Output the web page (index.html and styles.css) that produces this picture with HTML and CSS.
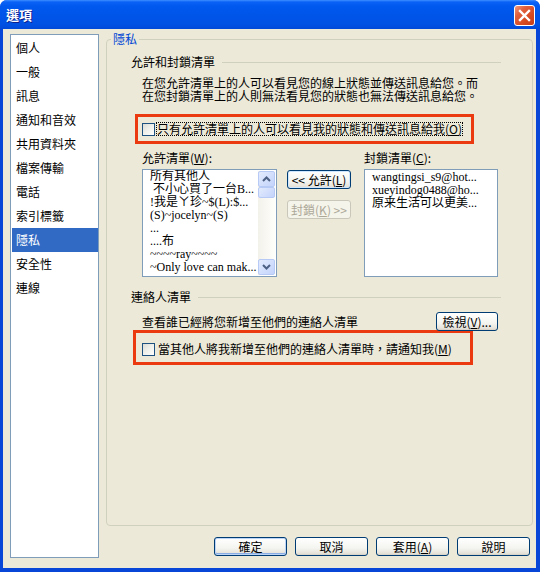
FILE: index.html
```html
<!DOCTYPE html>
<html>

<head>
    <meta charset="UTF-8">
    <title>選項</title>
    <link rel="stylesheet" href="styles.css">
</head>

<body>
    <div class="window">
        <!-- Barra de título -->
        <div class="titlebar">
            <span class="title">選項</span>
            <span class="close-btn">
                <svg width="13" height="13" viewBox="0 0 13 13">
                    <path d="M2 2 L11 11 M11 2 L2 11" stroke="#fff" stroke-width="2.4" stroke-linecap="square" />
                </svg>
            </span>
        </div>

        <div class="body">
            <!-- Categorías -->
            <ul class="category-list">
                <li>個人</li>
                <li>一般</li>
                <li>訊息</li>
                <li>通知和音效</li>
                <li>共用資料夾</li>
                <li>檔案傳輸</li>
                <li>電話</li>
                <li>索引標籤</li>
                <li class="selected">隱私</li>
                <li>安全性</li>
                <li>連線</li>
            </ul>

            <div class="main">
                <fieldset class="group">
                    <legend>隱私</legend>
                    <div class="group-body">
                        <div class="section-head"><span>允許和封鎖清單</span><span class="rule"></span></div>
                        <div class="desc">
                            <div class="desc-line">在您允許清單上的人可以看見您的線上狀態並傳送訊息給您。而</div>
                            <div class="desc-line">在您封鎖清單上的人則無法看見您的狀態也無法傳送訊息給您。</div>
                        </div>

                        <div class="notice notice-top">
                            <label class="check">
                                <span class="box"></span>
                                <span class="focus">只有允許清單上的人可以看見我的狀態和傳送訊息給我(<u>O</u>)</span>
                            </label>
                        </div>

                        <!-- Listas -->
                        <div class="lists">
                            <div class="list-col">
                                <div class="list-label">允許清單(<u>W</u>):</div>
                                <div class="listbox">
                                    <ul class="items">
                                        <li>所有其他人</li>
                                        <li>&nbsp;不小心買了一台B...</li>
                                        <li>!我是ㄚ珍~$(L):$...</li>
                                        <li>(S)~jocelyn~(S)</li>
                                        <li>...</li>
                                        <li>....布</li>
                                        <li>~~~~ray~~~~</li>
                                        <li>~Only love can mak...</li>
                                    </ul>
                                    <div class="scrollbar">
                                        <span class="sb-btn">
                                            <svg width="9" height="6" viewBox="0 0 9 6"><path d="M1 5 L4.5 1.5 L8 5" fill="none" stroke="#4D6185" stroke-width="2" /></svg>
                                        </span>
                                        <span class="sb-thumb"></span>
                                        <span class="sb-track"></span>
                                        <span class="sb-btn">
                                            <svg width="9" height="6" viewBox="0 0 9 6"><path d="M1 1 L4.5 4.5 L8 1" fill="none" stroke="#4D6185" stroke-width="2" /></svg>
                                        </span>
                                    </div>
                                </div>
                            </div>

                            <div class="mid-buttons">
                                <button class="btn btn-focus">&lt;&lt; 允許(<u>L</u>)</button>
                                <button class="btn btn-disabled">封鎖(<u>K</u>) &gt;&gt;</button>
                            </div>

                            <div class="list-col list-right">
                                <div class="list-label">封鎖清單(<u>C</u>):</div>
                                <div class="listbox">
                                    <ul class="items items-right">
                                        <li>wangtingsi_s9@hot...</li>
                                        <li>xueyindog0488@ho...</li>
                                        <li>原来生活可以更美...</li>
                                    </ul>
                                </div>
                            </div>
                        </div>

                        <div class="section-head section-contacts"><span>連絡人清單</span><span class="rule"></span></div>
                        <div class="view-row">
                            <span class="view-text">查看誰已經將您新增至他們的連絡人清單</span>
                            <button class="btn btn-view">檢視(<u>V</u>)...</button>
                        </div>

                        <div class="notice notice-bottom">
                            <label class="check">
                                <span class="box"></span>
                                <span class="check-text">當其他人將我新增至他們的連絡人清單時，請通知我(<u>M</u>)</span>
                            </label>
                        </div>
                    </div>
                </fieldset>

                <!-- Botones -->
                <div class="buttons">
                    <button class="btn btn-default">確定</button>
                    <button class="btn">取消</button>
                    <button class="btn">套用(<u>A</u>)</button>
                    <button class="btn">說明</button>
                </div>
            </div>
        </div>
    </div>
</body>

</html>
```

FILE: styles.css
```css
* {
    box-sizing: border-box;
}

body {
    margin: 0;
    font-family: "Noto Sans CJK TC", "Noto Sans", sans-serif;
    font-size: 12px;
    color: #000;
    background: #fff;
}

u {
    text-decoration: underline;
    text-underline-offset: 1px;
}

.window {
    width: 540px;
    height: 572px;
    display: flex;
    flex-direction: column;
    background: #0846D8;
    border-radius: 7px 7px 0 0;
    overflow: hidden;
}

.titlebar {
    height: 29px;
    flex: none;
    display: flex;
    justify-content: space-between;
    align-items: flex-start;
    padding: 5px 5px 0 6px;
    background: linear-gradient(#3D8FFF 0, #0C62F6 2px, #0059EF 6px, #0055E9 50%, #0051E3 85%, #0048D8 100%);
}

.title {
    color: #fff;
    font-weight: bold;
    font-size: 13px;
    line-height: 20px;
    text-shadow: 1px 1px #10208A;
}

.close-btn {
    width: 21px;
    height: 21px;
    border: 1px solid #fff;
    border-radius: 3px;
    background: linear-gradient(135deg, #F29A7C 0, #E2603E 30%, #D4481F 70%, #C53D18 100%);
    display: flex;
    align-items: center;
    justify-content: center;
}

.body {
    flex: 1;
    margin: 0 4px 4px 3px;
    background: #ECE9D8;
    display: grid;
    grid-template-columns: 89px 1fr;
    column-gap: 7px;
    padding: 3px 3px 10px 7px;
}

/* Lista de categorías */
.category-list {
    list-style: none;
    margin: 2px 0 0;
    padding: 1px 0 0;
    background: #fff;
    border: 1px solid #7F9DB9;
}

.category-list li {
    height: 24px;
    line-height: 24px;
    margin-left: 1px;
    padding-left: 4px;
}

.category-list li.selected {
    background: #316AC5;
    color: #fff;
}

.main {
    display: flex;
    flex-direction: column;
    padding-bottom: 2px;
    min-width: 0;
}

.group {
    flex: 1;
    margin: 0 0 11px;
    padding: 0 31px 0 0;
    border: 1px solid #D0D0BF;
    border-radius: 4px;
    min-width: 0;
}

.group legend {
    color: #0046D5;
    padding: 0 2px;
    margin-left: 4px;
    line-height: 14px;
}

.group-body {
    padding-left: 24px;
}

.section-head {
    display: flex;
    align-items: center;
    margin-top: 9px;
    line-height: 14px;
}

.section-head .rule {
    flex: 1;
    height: 1px;
    margin-left: 7px;
    background: #D0D0BF;
}

.desc {
    margin: 9px 0 0 11px;
    font-family: "Liberation Sans", "Noto Sans CJK TC", sans-serif;
}

.desc-line {
    height: 13px;
    line-height: 13px;
    white-space: nowrap;
}

/* Recuadros rojos */
.notice {
    border: 3px solid #EC3A10;
}

.notice-top {
    margin: 10px 0 0 4px;
    width: 339px;
    height: 30px;
    padding: 5px 0 0 4px;
}

.notice-bottom {
    margin: -1px 0 0 2px;
    width: 340px;
    height: 35px;
    padding: 9px 0 0 6px;
}

.check {
    display: flex;
    align-items: center;
    line-height: 14px;
}

.box {
    width: 13px;
    height: 13px;
    flex: none;
    border: 1px solid #1C5180;
    background: linear-gradient(135deg, #DCDCD7 0, #F0F0EC 50%, #FFFFFF 100%);
}

.focus {
    margin-left: 1px;
    padding: 0 1px;
    outline: 1px dotted #000;
    outline-offset: -1px;
}

.check-text {
    margin-left: 3px;
}

/* Listas */
.lists {
    display: flex;
    margin: 7px 0 0 11px;
}

.list-col {
    width: 135px;
}

.list-right {
    width: 134px;
    margin-left: 13px;
}

.list-label {
    line-height: 14px;
}

.listbox {
    margin-top: 4px;
    height: 108px;
    border: 1px solid #7F9DB9;
    background: #fff;
    display: flex;
}

.items {
    flex: 1;
    list-style: none;
    margin: 0;
    padding: 0 0 0 7px;
    font-family: "Liberation Serif", "Noto Sans CJK TC", serif;
    line-height: 13px;
    white-space: nowrap;
    overflow: hidden;
}

.items-right {
    padding-left: 7px;
    padding-top: 1px;
}

.scrollbar {
    width: 17px;
    flex: none;
    margin: 1px 1px 1px 0;
    display: flex;
    flex-direction: column;
    background: linear-gradient(90deg, #F3F1EA, #FEFEFB);
}

.sb-btn,
.sb-thumb {
    border: 1px solid #B7CAF5;
    border-radius: 2px;
    background: linear-gradient(135deg, #E3EBFD, #C3D3FB);
}

.sb-btn {
    height: 16px;
    display: flex;
    align-items: center;
    justify-content: center;
}

.sb-thumb {
    height: 11px;
}

.sb-track {
    flex: 1;
}

.mid-buttons {
    display: flex;
    flex-direction: column;
    margin-left: 10px;
    padding-top: 19px;
    gap: 11px;
}

.mid-buttons .btn {
    width: 64px;
}

/* Botones */
.btn {
    height: 19px;
    width: 73px;
    padding: 0;
    font-family: "Noto Sans CJK TC", "Noto Sans", sans-serif;
    font-size: 12px;
    line-height: 15px;
    color: #000;
    border: 1px solid #003C74;
    border-radius: 3px;
    background: linear-gradient(#FFFFFF 0, #F4F4F0 60%, #E6E3DA 90%, #D6D0C5 100%);
}

.btn-default {
    box-shadow: inset 0 0 0 1px #BCD4F6, inset 0 -1px 0 1px #89ADE4;
}

.btn-focus {
    box-shadow: inset 0 0 0 1px #CEE7FF;
}

.btn-disabled {
    color: #ACA899;
    border-color: #C9C7BA;
    background: #F5F4EA;
}

.section-contacts {
    margin-top: 13px;
}

.view-row {
    display: flex;
    justify-content: space-between;
    align-items: center;
    margin-top: 8px;
}

.view-text {
    margin-left: 11px;
}

.btn-view {
    width: 62px;
    margin-right: 3px;
}

.buttons {
    display: flex;
    justify-content: flex-end;
    gap: 8px;
    padding-right: 3px;
}
```
